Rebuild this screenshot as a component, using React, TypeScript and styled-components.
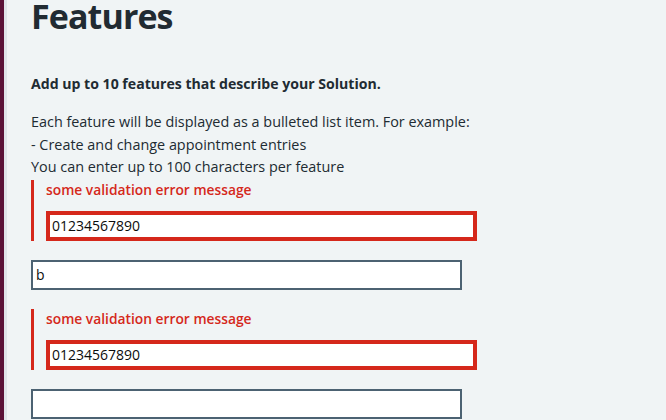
import styled, { createGlobalStyle } from "styled-components";

const GlobalStyle = createGlobalStyle`
    html, body {
        margin: 0;
        padding: 0;
        background: #f0f4f5;
    }
    body {
        font-family: "Open Sans", "Noto Sans", sans-serif;
        color: #212b32;
    }
    * { box-sizing: border-box; }
`;

const Page = styled.div`
    display: flex;
    min-height: 420px;
    overflow: hidden;
`;

const Rail = styled.div`
    width: 4px;
    flex: none;
    background: #5b1237;
`;

const Gutter = styled.div`
    width: 3px;
    flex: none;
    background: #dfe3e8;
`;

const Content = styled.main`
    flex: 1;
    padding: 0 0 0 24px;
`;

const Title = styled.h1`
    margin: 0;
    font-size: 34px;
    line-height: 32px;
    font-weight: 700;
    letter-spacing: -0.9px;
    color: #212b32;
`;

const Lead = styled.p`
    margin: 41px 0 0 0;
    font-size: 14.1px;
    line-height: 22px;
    font-weight: 700;
`;

const Hint = styled.div`
    margin-top: 16px;
    font-size: 14.4px;
    line-height: 22.5px;
`;

const HintLine = styled.div``;

const FormGroup = styled.div<{ $error?: boolean }>`
    margin: ${p => (p.$error ? "1px 0 19px 0" : "0 0 19px 0")};
    ${p =>
        p.$error &&
        `
        border-left: 3px solid #d5281b;
        padding-left: 12px;
    `}
`;

const ErrorMessage = styled.span`
    display: block;
    margin: 0 0 11px 0;
    font-size: 13.8px;
    line-height: 20px;
    font-weight: 600;
    color: #d5281b;
`;

const TextInput = styled.input<{ $error?: boolean }>`
    display: block;
    width: 431px;
    height: 30px;
    margin: 0;
    padding: ${p => (p.$error ? "0 2px" : "0 3px")};
    font-family: "Open Sans", "Noto Sans", sans-serif;
    font-size: 14px;
    color: #0b0c0c;
    background: #ffffff;
    border: ${p => (p.$error ? "4px solid #d5281b" : "2px solid #4c6272")};
    border-radius: 0;
    outline: none;
`;

interface Feature {
    id: number;
    value: string;
    error?: string;
}

const features: Feature[] = [
    { id: 1, value: "01234567890", error: "some validation error message" },
    { id: 2, value: "b" },
    { id: 3, value: "01234567890", error: "some validation error message" },
    { id: 4, value: "" },
];

const App = () => {
    return (
        <Page>
            <GlobalStyle />
            <Rail />
            <Gutter />
            <Content>
                <Title>Features</Title>
                <Lead>Add up to 10 features that describe your Solution.</Lead>
                <Hint>
                    <HintLine>Each feature will be displayed as a bulleted list item. For example:</HintLine>
                    <HintLine>- Create and change appointment entries</HintLine>
                    <HintLine>You can enter up to 100 characters per feature</HintLine>
                </Hint>
                {features.map(f => (
                    <FormGroup key={f.id} $error={!!f.error}>
                        {f.error && <ErrorMessage>{f.error}</ErrorMessage>}
                        <TextInput $error={!!f.error} defaultValue={f.value} aria-label={`Feature ${f.id}`} />
                    </FormGroup>
                ))}
            </Content>
        </Page>
    );
};

export default App;
